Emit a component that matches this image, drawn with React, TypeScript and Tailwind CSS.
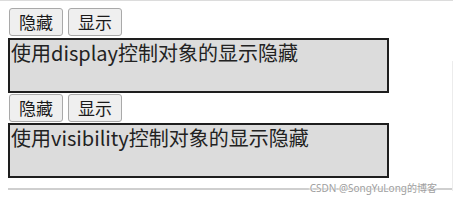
import React from "react";

const font = { fontFamily: '"Noto Sans CJK SC", "Noto Sans", sans-serif' };

function Btn({ children }: { children: React.ReactNode }) {
  return (
    <button className="h-[28px] w-[54px] rounded-[3px] border border-[#a9a9a9] bg-[#efefef] text-[17px] leading-[22px] text-[#1a1a1a] font-['Noto_Sans_CJK_SC',sans-serif]">
      {children}
    </button>
  );
}

function Box({ text }: { text: string }) {
  return (
    <div className="ml-[8px] h-[55px] w-[381px] border-2 border-[#1e1e1e] bg-[#dcdcdc] pl-[1px] text-[20px] leading-[25px] text-[#222] font-['Noto_Sans_CJK_SC',sans-serif]">
      {text}
    </div>
  );
}

export default function App() {
  return (
    <div className="relative h-[202px] w-[453px] overflow-hidden border-t border-[#dcdcdc] bg-white" style={font}>
      <div className="mt-[7px] flex gap-[5px] pl-[9px]">
        <Btn>隐藏</Btn>
        <Btn>显示</Btn>
      </div>
      <div className="mt-[2px]">
        <Box text="使用display控制对象的显示隐藏" />
      </div>
      <div className="mt-[1px] flex gap-[5px] pl-[9px]">
        <Btn>隐藏</Btn>
        <Btn>显示</Btn>
      </div>
      <div className="mt-[1px]">
        <Box text="使用visibility控制对象的显示隐藏" />
      </div>
      <div className="ml-[8px] mt-[10px] h-[2px] bg-[#cfcfcf]" />
      <div className="absolute right-0 top-[60px] h-[130px] w-[1px] bg-[#ececec]" />
      <div className="absolute right-[16px] top-[181px] whitespace-nowrap text-[10px] leading-[13px] text-[#a0a0a0] font-['Noto_Sans','Noto_Sans_CJK_SC',sans-serif] [text-shadow:0_0_2px_#fff,0_0_2px_#fff,0_0_2px_#fff]">
        CSDN @SongYuLong的博客
      </div>
    </div>
  );
}
